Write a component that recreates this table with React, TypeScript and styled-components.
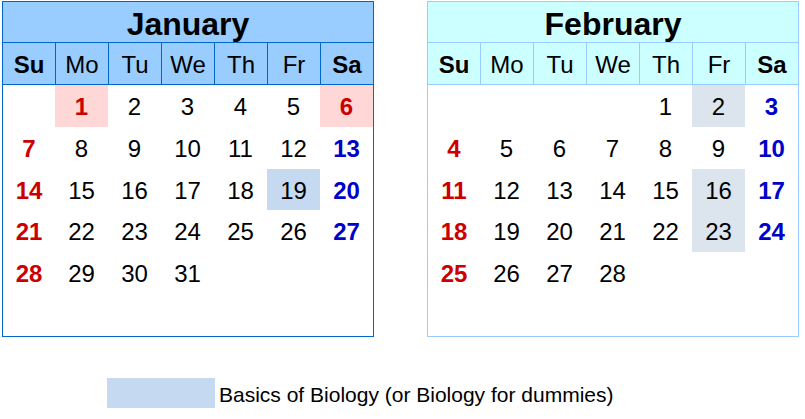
import styled, { createGlobalStyle } from "styled-components";

const GlobalStyle = createGlobalStyle`
  html, body {
    margin: 0;
    padding: 0;
    background: #ffffff;
  }
  body {
    font-family: "Liberation Sans", Arial, sans-serif;
    color: #000000;
  }
`;

type Theme = { head: string; line: string };
type Mark = "holiday" | "bio" | "grey";

interface IMonth {
  name: string;
  offset: number;
  days: number;
  theme: Theme;
  marks: Record<number, Mark>;
}

const WEEK = ["Su", "Mo", "Tu", "We", "Th", "Fr", "Sa"];

const months: IMonth[] = [
  {
    name: "January",
    offset: 1,
    days: 31,
    theme: { head: "#99ccff", line: "#0066cc" },
    marks: { 1: "holiday", 6: "holiday", 19: "bio" },
  },
  {
    name: "February",
    offset: 4,
    days: 28,
    theme: { head: "#ccffff", line: "#99ccff" },
    marks: { 2: "grey", 16: "grey", 23: "grey" },
  },
];

const markBg: Record<Mark, string> = {
  holiday: "#ffd7d7",
  bio: "#c5d9f1",
  grey: "#dce4ee",
};

const Month: React.FC<IMonth> = ({ name, offset, days, theme, marks }) => {
  const cells: Array<number | null> = [];
  for (let i = 0; i < offset; i++) cells.push(null);
  for (let d = 1; d <= days; d++) cells.push(d);
  while (cells.length < 42) cells.push(null);

  return (
    <Box $line={theme.line}>
      <Title $bg={theme.head} $line={theme.line}>{name}</Title>
      <HeadRow $line={theme.line}>
        {WEEK.map((w, i) => (
          <HeadCell key={w} $bg={theme.head} $bold={i === 0 || i === 6}>{w}</HeadCell>
        ))}
      </HeadRow>
      <Days>
        {cells.map((d, i) => {
          const col = i % 7;
          const mark = d ? marks[d] : undefined;
          const tone = mark === "holiday" || col === 0 ? "red" : col === 6 ? "blue" : "plain";
          return (
            <Day key={i} $bg={mark ? markBg[mark] : "transparent"} $tone={tone}>
              {d ?? ""}
            </Day>
          );
        })}
      </Days>
    </Box>
  );
};

const App: React.FC = () => {
  return (
    <Page>
      <GlobalStyle />
      <Calendars>
        {months.map(m => <Month key={m.name} {...m} />)}
      </Calendars>
      <Legend>
        <Swatch />
        <LegendText>Basics of Biology (or Biology for dummies)</LegendText>
      </Legend>
    </Page>
  );
};

const Page = styled.div`
  width: 805px;
  height: 419px;
  padding: 1px 0 0 2px;
  box-sizing: border-box;
`;

const Calendars = styled.div`
  display: flex;
  gap: 53px;
`;

const Box = styled.div<{ $line: string }>`
  width: 372px;
  box-sizing: border-box;
  border: 1px solid ${p => p.$line};
`;

const Title = styled.div<{ $bg: string; $line: string }>`
  height: 41px;
  background: ${p => p.$bg};
  border-bottom: 1px solid ${p => p.$line};
  display: flex;
  align-items: center;
  justify-content: center;
  font-size: 32px;
  font-weight: 700;
  padding-top: 4px;
  box-sizing: border-box;
`;

const HeadRow = styled.div<{ $line: string }>`
  display: grid;
  grid-template-columns: repeat(7, 52px);
  gap: 1px;
  background: ${p => p.$line};
  border-bottom: 1px solid ${p => p.$line};
`;

const HeadCell = styled.div<{ $bg: string; $bold: boolean }>`
  height: 41px;
  padding-top: 2px;
  box-sizing: border-box;
  background: ${p => p.$bg};
  display: flex;
  align-items: center;
  justify-content: center;
  font-size: 24px;
  font-weight: ${p => (p.$bold ? 700 : 400)};
`;

const Days = styled.div`
  display: grid;
  grid-template-columns: 52px repeat(6, 53px);
  grid-template-rows: repeat(6, 1fr);
  height: 251px;
`;

const toneColor = { red: "#cc0000", blue: "#0000cc", plain: "#000000" };

const Day = styled.div<{ $bg: string; $tone: "red" | "blue" | "plain" }>`
  background: ${p => p.$bg};
  padding-top: 2px;
  box-sizing: border-box;
  display: flex;
  align-items: center;
  justify-content: center;
  font-size: 24px;
  color: ${p => toneColor[p.$tone]};
  font-weight: ${p => (p.$tone === "plain" ? 400 : 700)};
`;

const Legend = styled.div`
  display: flex;
  align-items: center;
  gap: 4px;
  margin: 41px 0 0 105px;
`;

const Swatch = styled.div`
  width: 108px;
  height: 30px;
  background: #c5d9f1;
`;

const LegendText = styled.span`
  font-size: 21px;
  padding-top: 3px;
`;

export default App;
